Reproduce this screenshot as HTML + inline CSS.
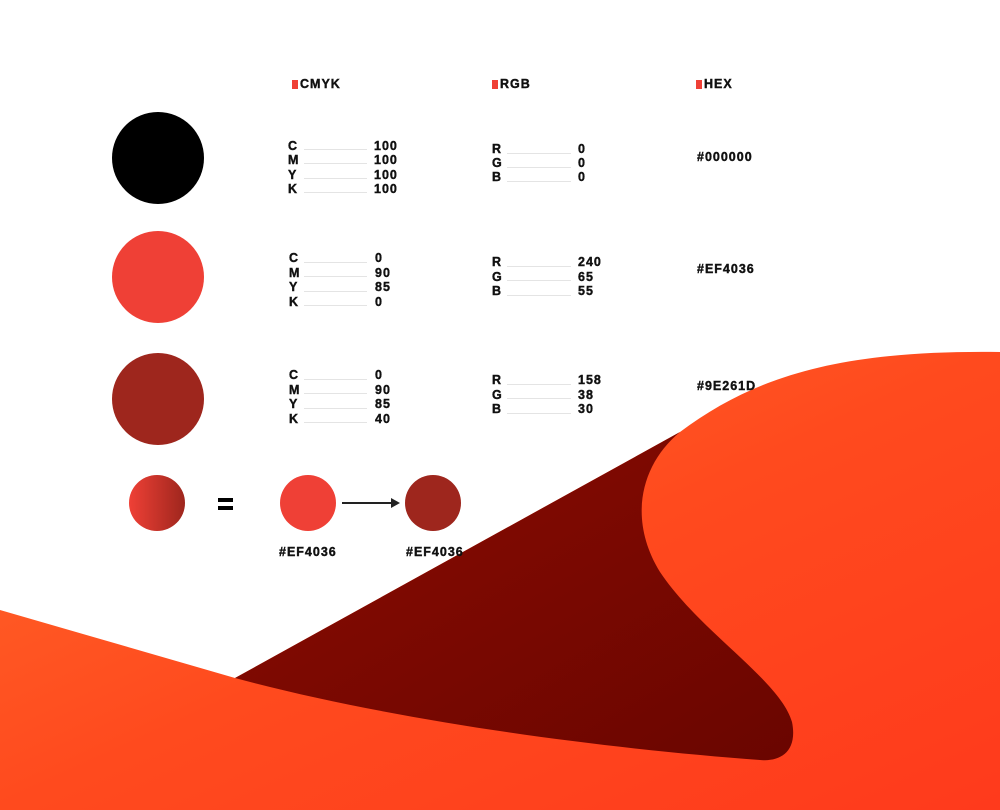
<!DOCTYPE html>
<html><head><style>
body{margin:0;width:1000px;height:810px;overflow:hidden;background:#fff;position:relative;font-family:"Liberation Sans",sans-serif;font-weight:bold;color:#111}
.a{position:absolute}
.t{position:absolute;font-size:12.5px;line-height:14px;letter-spacing:1px;-webkit-text-stroke:0.4px #111}
.h{position:absolute;font-size:12.5px;line-height:14px;letter-spacing:1px;-webkit-text-stroke:0.4px #111}
.h:before{content:"";display:inline-block;width:6px;height:9px;background:#ef4036;margin-right:2px;vertical-align:-1px;-webkit-text-stroke:0}
.c{position:absolute;border-radius:50%}
.l{position:absolute;height:1px;background:#e4e4e4}
</style></head><body>
<svg class="a" style="left:0;top:0" width="1000" height="810">
<defs>
<linearGradient id="o" x1="0" y1="0" x2="1" y2="1"><stop offset="0" stop-color="#ff6a2a"/><stop offset="0.5" stop-color="#ff4a1e"/><stop offset="1" stop-color="#ff3a1c"/></linearGradient>
<linearGradient id="d" x1="0" y1="0" x2="1" y2="1"><stop offset="0" stop-color="#8a0c02"/><stop offset="1" stop-color="#6a0500"/></linearGradient>
</defs>
<path d="M0,610 L235,678 L680,432 C760,372 850,350 1000,352 L1000,810 L0,810 Z" fill="url(#o)"/>
<path d="M235,678 L680,432 C640,465 628,520 660,572 C700,632 780,680 792,722 C798,752 780,762 760,760 C600,748 400,722 235,678 Z" fill="url(#d)"/>
</svg>
<div class="h" style="left:292px;top:77px">CMYK</div>
<div class="h" style="left:492px;top:77px">RGB</div>
<div class="h" style="left:696px;top:77px">HEX</div>

<div class="c" style="left:112px;top:112px;width:92px;height:92px;background:#000"></div>
<div class="c" style="left:112px;top:231px;width:92px;height:92px;background:#ef4036"></div>
<div class="c" style="left:112px;top:353px;width:92px;height:92px;background:#9e261d"></div>

<div class="t" style="left:288px;top:139px;line-height:14.3px">C<br>M<br>Y<br>K</div>
<div class="t" style="left:374px;top:139px;line-height:14.3px">100<br>100<br>100<br>100</div>
<div class="l" style="left:304px;top:149px;width:63px"></div><div class="l" style="left:304px;top:163px;width:63px"></div><div class="l" style="left:304px;top:178px;width:63px"></div><div class="l" style="left:304px;top:192px;width:63px"></div>
<div class="t" style="left:492px;top:142px">R<br>G<br>B</div>
<div class="t" style="left:578px;top:142px">0<br>0<br>0</div>
<div class="l" style="left:507px;top:153px;width:64px"></div><div class="l" style="left:507px;top:167px;width:64px"></div><div class="l" style="left:507px;top:181px;width:64px"></div>
<div class="t" style="left:697px;top:150px">#000000</div>

<div class="t" style="left:289px;top:251px;line-height:14.5px">C<br>M<br>Y<br>K</div>
<div class="t" style="left:375px;top:251px;line-height:14.5px">0<br>90<br>85<br>0</div>
<div class="l" style="left:304px;top:262px;width:63px"></div><div class="l" style="left:304px;top:276px;width:63px"></div><div class="l" style="left:304px;top:291px;width:63px"></div><div class="l" style="left:304px;top:305px;width:63px"></div>
<div class="t" style="left:492px;top:255px;line-height:14.5px">R<br>G<br>B</div>
<div class="t" style="left:578px;top:255px;line-height:14.5px">240<br>65<br>55</div>
<div class="l" style="left:507px;top:266px;width:64px"></div><div class="l" style="left:507px;top:280px;width:64px"></div><div class="l" style="left:507px;top:295px;width:64px"></div>
<div class="t" style="left:697px;top:262px">#EF4036</div>

<div class="t" style="left:289px;top:368px;line-height:14.5px">C<br>M<br>Y<br>K</div>
<div class="t" style="left:375px;top:368px;line-height:14.5px">0<br>90<br>85<br>40</div>
<div class="l" style="left:304px;top:379px;width:63px"></div><div class="l" style="left:304px;top:393px;width:63px"></div><div class="l" style="left:304px;top:408px;width:63px"></div><div class="l" style="left:304px;top:422px;width:63px"></div>
<div class="t" style="left:492px;top:373px;line-height:14.5px">R<br>G<br>B</div>
<div class="t" style="left:578px;top:373px;line-height:14.5px">158<br>38<br>30</div>
<div class="l" style="left:507px;top:384px;width:64px"></div><div class="l" style="left:507px;top:398px;width:64px"></div><div class="l" style="left:507px;top:413px;width:64px"></div>
<div class="t" style="left:697px;top:379px">#9E261D</div>

<div class="c" style="left:129px;top:475px;width:56px;height:56px;background:linear-gradient(90deg,#ef4036,#9e261d)"></div>
<div class="a" style="left:218px;top:498px;width:15px;height:4px;background:#000"></div>
<div class="a" style="left:218px;top:506px;width:15px;height:4px;background:#000"></div>
<div class="c" style="left:280px;top:475px;width:56px;height:56px;background:#ef4036"></div>
<div class="c" style="left:405px;top:475px;width:56px;height:56px;background:#9e261d"></div>
<div class="a" style="left:342px;top:502px;width:52px;height:2px;background:#222"></div>
<svg class="a" style="left:391px;top:498px" width="10" height="10"><path d="M0,0 L9,5 L0,10 Z" fill="#222"/></svg>
<div class="t" style="left:279px;top:545px">#EF4036</div>
<div class="t" style="left:406px;top:545px">#EF4036</div>
</body></html>
